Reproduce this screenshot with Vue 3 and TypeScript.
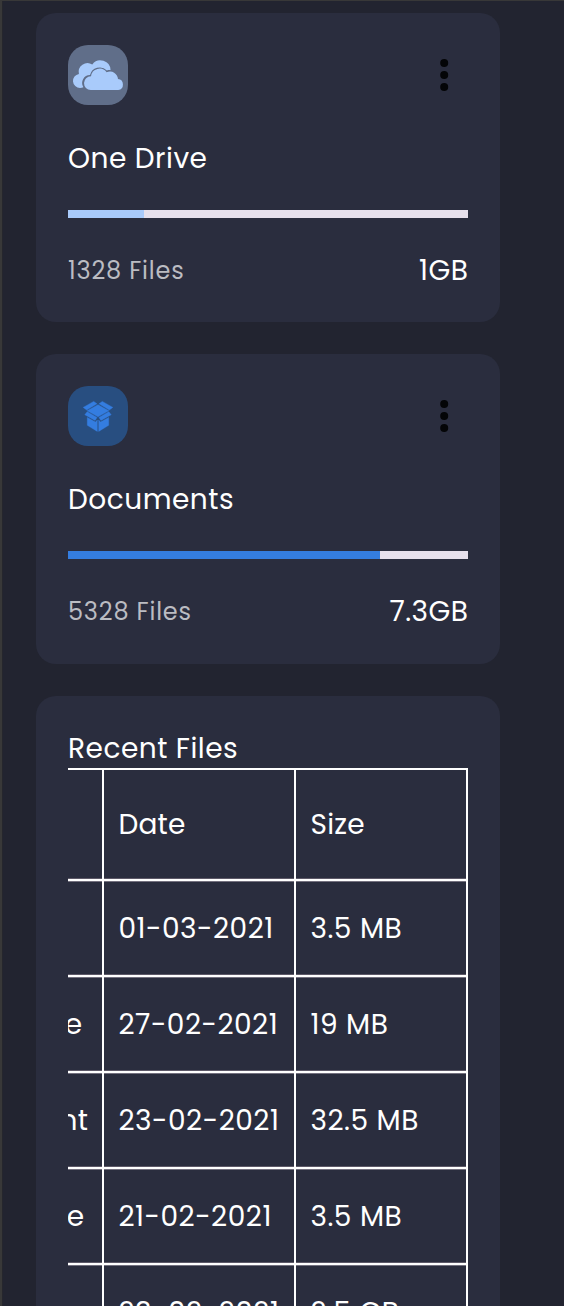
<script setup lang="ts">
interface StorageCard {
  id: string
  name: string
  files: string
  size: string
  percent: number
}

interface RecentFile {
  id: string
  name: string
  date: string
  size: string
}

const cards: StorageCard[] = [
  { id: 'drive', name: 'One Drive', files: '1328 Files', size: '1GB', percent: 19 },
  { id: 'documents', name: 'Documents', files: '5328 Files', size: '7.3GB', percent: 78 },
]

const recent: RecentFile[] = [
  { id: 'xd', name: '', date: '01-03-2021', size: '3.5 MB' },
  { id: 'figma', name: 'Figma File', date: '27-02-2021', size: '19 MB' },
  { id: 'document', name: 'Document', date: '23-02-2021', size: '32.5 MB' },
  { id: 'sound', name: 'Sound File', date: '21-02-2021', size: '3.5 MB' },
  { id: 'media', name: 'Media File', date: '23-02-2021', size: '2.5 GB' },
]
</script>

<template>
  <main class="page">
    <section v-for="card in cards" :key="card.id" class="card storage" :class="card.id">
      <div class="head">
        <div class="tile">
          <svg v-if="card.id === 'drive'" class="clouds" viewBox="0 0 60 60" aria-hidden="true">
            <path d="M15.4 42.3C14.5 42.8 13.2 43 12 43A7.1 7.1 0 0 1 10.9 28.9A8.9 8.9 0 0 1 24.3 19.4A10.2 10.2 0 0 1 42.6 25.2C41.3 25 40 25.2 38.9 25.5A10 10 0 0 0 22 30.1A7.9 7.9 0 0 0 15.4 42.3Z" />
            <path d="M22.7 45A6.8 6.8 0 0 1 23 31.3A8.6 8.6 0 0 1 38.6 27.3A8 8 0 0 1 50 34.1A5.5 5.5 0 0 1 50.3 45Z" />
          </svg>
          <svg v-else class="box" viewBox="0 0 60 60" aria-hidden="true">
            <path d="M15.2 21.4L25.7 15.4L29 17.8L18.7 24.1Z" />
            <path d="M31 17.8L34.3 15.4L44.8 21.4L41.3 24.1Z" />
            <path d="M30 18.7L40.8 24.8L30 30.8L19.2 24.8Z" />
            <path d="M19.2 25.7L29 31.4L27.1 34.4L16.8 28.7Z" />
            <path d="M40.8 25.7L31 31.4L32.9 34.4L43.2 28.7Z" />
            <path d="M19.3 31.5L27.5 36L29.3 34V45.4L19.3 39.3Z" />
            <path d="M40.7 31.5L32.5 36L30.7 34V45.4L40.7 39.3Z" />
          </svg>
        </div>
        <svg class="dots" viewBox="0 0 48 48" aria-hidden="true">
          <circle cx="24.2" cy="11.9" r="4" />
          <circle cx="24.2" cy="23.9" r="4" />
          <circle cx="24.2" cy="35.9" r="4" />
        </svg>
      </div>
      <div class="name">{{ card.name }}</div>
      <div class="track"><div class="fill" :style="{ width: card.percent + '%' }"></div></div>
      <div class="foot">
        <span class="count">{{ card.files }}</span>
        <span class="total">{{ card.size }}</span>
      </div>
    </section>

    <section class="card recent">
      <h2 class="title">Recent Files</h2>
      <div class="table">
        <div class="row header">
          <div class="cell file"></div>
          <div class="cell date">Date</div>
          <div class="cell size">Size</div>
        </div>
        <div v-for="file in recent" :key="file.id" class="row" :class="'row-' + file.id">
          <div class="cell file">{{ file.name }}</div>
          <div class="cell date">{{ file.date }}</div>
          <div class="cell size">{{ file.size }}</div>
        </div>
      </div>
    </section>
  </main>
</template>

<style>
body {
  margin: 0;
  background: #222430;
}
</style>

<style scoped>
.page {
  box-sizing: border-box;
  width: 564px;
  height: 1306px;
  overflow: hidden;
  border-top: 1px solid #383838;
  border-left: 2px solid #383838;
  box-shadow: inset 1px 0 0 #25262d;
  padding: 12px 64px 0 34px;
  display: flex;
  flex-direction: column;
  gap: 32px;
  background: #222430;
  color: #fff;
  font-family: Poppins, Inter, "Noto Sans", sans-serif;
  font-size: 28px;
  letter-spacing: 0.5px;
  line-height: 42px;
  white-space: nowrap;
}
.card {
  box-sizing: border-box;
  flex: none;
  padding: 32px;
  border-radius: 20px;
  background: #2a2d3e;
}
.storage {
  height: 309.4px;
}
.head {
  display: flex;
  justify-content: space-between;
  align-items: center;
  height: 60px;
}
.tile {
  width: 60px;
  height: 60px;
  border-radius: 20px;
}
.drive .tile {
  background: #606e89;
  fill: #a9cbfb;
}
.documents .tile {
  background: #284e80;
  fill: #347de0;
}
.tile svg {
  display: block;
  width: 60px;
  height: 60px;
}
.box {
  stroke: #347de0;
  stroke-width: 0.4;
  stroke-linejoin: round;
}
.dots {
  width: 48px;
  height: 48px;
  fill: #040507;
}
.name {
  height: 42px;
  margin-top: 33px;
}
.track {
  height: 8px;
  margin-top: 30px;
  background: #e6e0ec;
}
.fill {
  height: 100%;
}
.drive .fill {
  background: #a9cbfb;
}
.documents .fill {
  background: #347de0;
}
.foot {
  display: flex;
  justify-content: space-between;
  margin-top: 32px;
}
.count {
  font-size: 24px;
  letter-spacing: 0.8px;
  color: #bbbcc2;
}
.total {
  margin-right: -0.5px;
}
.recent {
  height: 700px;
}
.title {
  margin: 0;
  height: 40px;
  line-height: 42px;
  font-size: inherit;
  font-weight: 400;
}
.table {
  width: 400px;
  overflow: hidden;
  box-sizing: border-box;
  border-top: 2px solid #fff;
  border-right: 2px solid #fff;
}
.row {
  display: grid;
  grid-template-columns: 34px 192px 1fr;
  height: 96px;
  box-sizing: border-box;
  border-bottom: 2px solid #fff;
  box-shadow: inset 0 -1px 0 #5d5968, 0 1px 0 #74717f;
  line-height: 96px;
}
.row.header {
  height: 111px;
  line-height: 110px;
  letter-spacing: 0.2px;
}
.cell {
  min-width: 0;
}
.file {
  display: flex;
  justify-content: flex-end;
  overflow: hidden;
  box-sizing: border-box;
}
.row-figma .file {
  padding-right: 19.5px;
}
.row-document .file {
  padding-right: 13.5px;
}
.row-sound .file {
  padding-right: 17.5px;
}
.row-media .file {
  padding-right: 21px;
}
.date,
.size {
  height: 100%;
  padding-left: 14.5px;
  border-left: 2px solid #fff;
  box-sizing: border-box;
}
.row {
  grid-template-rows: 100%;
}
</style>
